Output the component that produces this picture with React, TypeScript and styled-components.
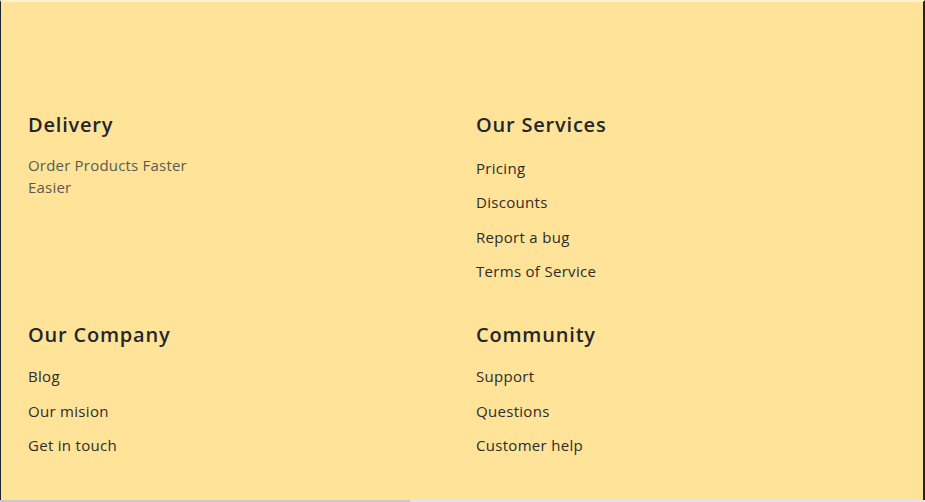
import React from "react";
import styled, { createGlobalStyle } from "styled-components";

const Global = createGlobalStyle`
  html, body { margin: 0; padding: 0; background: #ffffff; }
  body { font-family: "Open Sans", "Liberation Sans", sans-serif; }
  * { box-sizing: border-box; }
`;

const Frame = styled.div`
  width: 925px;
  height: 502px;
  overflow: hidden;
  display: flex;
  flex-direction: column;
`;

const Footer = styled.footer`
  flex: 1;
  min-height: 0;
  overflow: hidden;
  background: #ffe399;
  border-left: 1px solid #1f2330;
  border-right: 2px solid #1f2330;
  border-top: 2px solid #fff3cf;
  padding: 108px 28px 0 27px;
`;

const Grid = styled.div`
  display: grid;
  grid-template-columns: 421px 1fr;
  column-gap: 27px;
  row-gap: 36px;
`;

const Column = styled.div<{ $shift?: number }>`
  display: flex;
  flex-direction: column;
  margin-top: ${(p) => p.$shift ?? 0}px;
`;

const Heading = styled.h3`
  margin: 0;
  font-size: 20px;
  line-height: 30px;
  font-weight: 600;
  letter-spacing: 0.8px;
  color: #24262b;
`;

const Text = styled.p`
  margin: 14px 0 0;
  font-size: 15px;
  line-height: 22px;
  letter-spacing: 0.2px;
  color: #5a5a52;
  max-width: 175px;
`;

const Links = styled.ul<{ $top: number }>`
  list-style: none;
  margin: ${(p) => p.$top}px 0 0;
  padding: 0;
  display: flex;
  flex-direction: column;
  gap: 12.4px;
`;

const LinkItem = styled.li`
  font-size: 15px;
  line-height: 22px;
  letter-spacing: 0.3px;
  color: #2c2c2a;
`;

const Scrollbar = styled.div`
  height: 2px;
  display: flex;
  background: #e2e2f0;
`;

const Thumb = styled.div`
  width: 410px;
  background: #c9c9c9;
`;

const sections = [
  { title: "Our Services", links: ["Pricing", "Discounts", "Report a bug", "Terms of Service"], top: 17, shift: 0 },
  { title: "Our Company", links: ["Blog", "Our mision", "Get in touch"], top: 15, shift: 2 },
  { title: "Community", links: ["Support", "Questions", "Customer help"], top: 15, shift: 2 },
];

export default function App() {
  return (
    <Frame>
      <Global />
      <Footer>
        <Grid>
          <Column>
            <Heading>Delivery</Heading>
            <Text>Order Products Faster Easier</Text>
          </Column>
          {sections.map((s) => (
            <Column key={s.title} $shift={s.shift}>
              <Heading>{s.title}</Heading>
              <Links $top={s.top}>
                {s.links.map((l) => (
                  <LinkItem key={l}>{l}</LinkItem>
                ))}
              </Links>
            </Column>
          ))}
          <Column $shift={0}>
            <Heading>Contact</Heading>
          </Column>
        </Grid>
      </Footer>
      <Scrollbar>
        <Thumb />
      </Scrollbar>
    </Frame>
  );
}
